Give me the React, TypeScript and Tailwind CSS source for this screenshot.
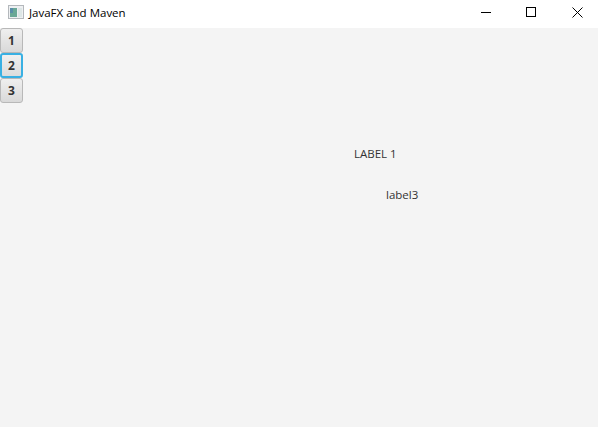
const buttons = ['1', '2', '3'];

const App = () => {
    return (
        <div className="flex h-[427px] w-[598px] flex-col overflow-hidden bg-[#f4f4f4] font-['Open_Sans','Noto_Sans',sans-serif] text-[11.5px] text-[#333333]">
            {/* Title bar */}
            <div className="flex h-[28px] shrink-0 items-center bg-white">
                <svg width="16" height="14" viewBox="0 0 16 14" className="mb-[4px] ml-[8px]">
                    <rect x="0.5" y="0.5" width="15" height="13" fill="#eef0f2" stroke="#b4b8bc" />
                    <rect x="2" y="3" width="7" height="9" fill="#6aa896" />
                    <rect x="2" y="3" width="3" height="5" fill="#5a8ea8" />
                    <rect x="10" y="3" width="4" height="9" fill="#dde6e6" />
                </svg>
                <span className="mb-[2px] ml-[5px] text-[11.5px] text-black">JavaFX and Maven</span>
                <div className="mb-[3px] ml-auto mr-[15px] flex items-center gap-[34px]">
                    <button className="flex h-[11px] w-[11px]">
                        <svg width="11" height="11" viewBox="0 0 11 11">
                            <path d="M0 5.5H10" stroke="#000" strokeWidth="1" fill="none" />
                        </svg>
                    </button>
                    <button className="flex h-[11px] w-[11px]">
                        <svg width="11" height="11" viewBox="0 0 11 11">
                            <rect x="0.5" y="0.5" width="9" height="9" stroke="#000" strokeWidth="1" fill="none" />
                        </svg>
                    </button>
                    <button className="ml-[1px] flex h-[11px] w-[11px]">
                        <svg width="11" height="11" viewBox="0 0 11 11">
                            <path d="M0.5 0.5L10.5 10.5M10.5 0.5L0.5 10.5" stroke="#000" strokeWidth="1" fill="none" />
                        </svg>
                    </button>
                </div>
            </div>

            {/* Buttons */}
            <div className="flex flex-col">
                {buttons.map(label => (
                    <button
                        key={label}
                        className={
                            label === '2'
                                ? 'box-border h-[25px] w-[23px] rounded-[3px] border-2 border-[#39b0e3] bg-gradient-to-b from-[#f0f0f0] to-[#dcdcdc] text-[12px] font-bold text-[#333333]'
                                : 'box-border h-[25px] w-[23px] rounded-[3px] border border-[#b8b8b8] bg-gradient-to-b from-[#efefef] to-[#d9d9d9] text-[12px] font-bold text-[#333333]'
                        }
                    >
                        {label}
                    </button>
                ))}
            </div>

            {/* Labels */}
            <div className="ml-[354px] mt-[42px] leading-[17px]">LABEL 1</div>
            <div className="ml-[386px] mt-[24px] leading-[17px]">label3</div>
        </div>
    );
};

export default App;
